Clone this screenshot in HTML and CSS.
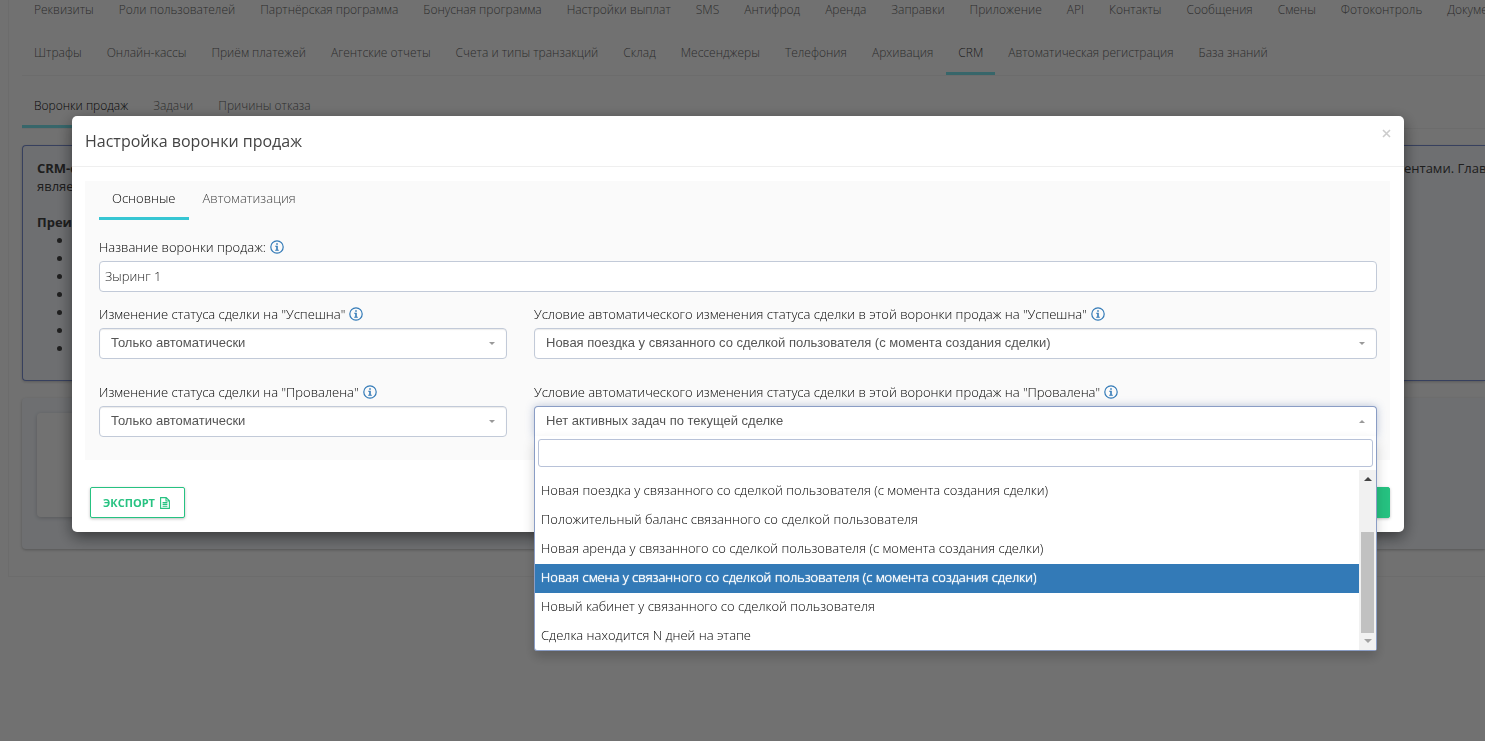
FILE: index.html
```html
<!DOCTYPE html>
<html lang="ru">
<head>
<meta charset="utf-8">
<title>Настройка воронки продаж</title>
<meta name="viewport" content="width=device-width, initial-scale=1">
<link rel="stylesheet" href="styles.css">
</head>
<body>
<svg class="sprite" aria-hidden="true">
  <symbol id="info" viewBox="0 0 14 14">
    <circle cx="7" cy="7" r="6.2" fill="none" stroke="currentColor" stroke-width="1.2"/>
    <path d="M6.2 3.2h1.6v1.5H6.2zM5.2 5.8h2.6v4h1v.9H5.2v-.9h1V6.7h-1z" fill="currentColor"/>
  </symbol>
</svg>

<main class="page">
  <section class="card">
    <nav class="tabs tabs-page">
      <a href="#">Реквизиты</a><a href="#">Роли пользователей</a><a href="#">Партнёрская программа</a><a href="#">Бонусная программа</a><a href="#">Настройки выплат</a><a href="#">SMS</a><a href="#">Антифрод</a><a href="#">Аренда</a><a href="#">Заправки</a><a href="#">Приложение</a><a href="#">API</a><a href="#">Контакты</a><a href="#">Сообщения</a><a href="#">Смены</a><a href="#">Фотоконтроль</a><a href="#">Документы</a>
    </nav>
    <nav class="tabs tabs-page tabs-line">
      <a href="#">Штрафы</a><a href="#">Онлайн-кассы</a><a href="#">Приём платежей</a><a href="#">Агентские отчеты</a><a href="#">Счета и типы транзакций</a><a href="#">Склад</a><a href="#">Мессенджеры</a><a href="#">Телефония</a><a href="#">Архивация</a><a href="#" class="active">CRM</a><a href="#">Автоматическая регистрация</a><a href="#">База знаний</a>
    </nav>
    <nav class="tabs tabs-page tabs-line tabs-sub">
      <a href="#" class="active">Воронки продаж</a><a href="#">Задачи</a><a href="#">Причины отказа</a>
    </nav>
    <div class="note">
      <div class="note-line"><span><b>CRM-система</b></span><span class="note-end">ентами. Главной</span></div>
      <div>является</div>
      <p><b>Преимущества</b></p>
      <ul><li></li><li></li><li></li><li></li><li></li><li></li><li></li></ul>
    </div>
    <div class="board"><div class="board-card"></div></div>
  </section>
</main>

<div class="overlay">
  <div class="modal" role="dialog" aria-modal="true" aria-labelledby="title">
    <header class="modal-head">
      <h1 id="title">Настройка воронки продаж</h1>
      <button type="button" class="close" aria-label="Закрыть"><svg viewBox="0 0 9 9"><path d="M1 1l7 7M8 1L1 8" stroke="currentColor" stroke-width="1.6"/></svg></button>
    </header>
    <form class="modal-body">
      <div class="panel">
        <nav class="tabs tabs-modal"><a href="#" class="active">Основные</a><a href="#">Автоматизация</a></nav>
        <div class="grid">
          <div class="field full">
            <label for="name">Название воронки продаж: <svg class="info"><use href="#info"/></svg></label>
            <input id="name" class="control" type="text" value="Зыринг 1">
          </div>
          <div class="field">
            <label for="won">Изменение статуса сделки на "Успешна" <svg class="info"><use href="#info"/></svg></label>
            <div class="pick"><select id="won" class="control"><option>Только автоматически</option></select></div>
          </div>
          <div class="field wide">
            <label for="won-rule">Условие автоматического изменения статуса сделки в этой воронки продаж на "Успешна" <svg class="info"><use href="#info"/></svg></label>
            <div class="pick"><select id="won-rule" class="control"><option>Новая поездка у связанного со сделкой пользователя (с момента создания сделки)</option></select></div>
          </div>
          <div class="field">
            <label for="lost">Изменение статуса сделки на "Провалена" <svg class="info"><use href="#info"/></svg></label>
            <div class="pick"><select id="lost" class="control"><option>Только автоматически</option></select></div>
          </div>
          <div class="field wide">
            <label for="lost-rule">Условие автоматического изменения статуса сделки в этой воронки продаж на "Провалена" <svg class="info"><use href="#info"/></svg></label>
            <div class="pick open">
              <button id="lost-rule" type="button" class="control" aria-haspopup="listbox" aria-expanded="true">Нет активных задач по текущей сделке</button>
              <div class="menu">
                <input class="search" type="search" aria-label="Поиск">
                <div class="menu-body">
                  <ul class="options" role="listbox" aria-label="Условие">
                    <li role="option">Новая поездка у связанного со сделкой пользователя (с момента создания сделки)</li>
                    <li role="option">Положительный баланс связанного со сделкой пользователя</li>
                    <li role="option">Новая аренда у связанного со сделкой пользователя (с момента создания сделки)</li>
                    <li role="option" class="current" aria-selected="true">Новая смена у связанного со сделкой пользователя (с момента создания сделки)</li>
                    <li role="option">Новый кабинет у связанного со сделкой пользователя</li>
                    <li role="option">Сделка находится N дней на этапе</li>
                  </ul>
                  <div class="scroll" aria-hidden="true"><i class="up"></i><i class="thumb"></i><i class="down"></i></div>
                </div>
              </div>
            </div>
          </div>
        </div>
      </div>
      <footer class="modal-foot">
        <button type="button" class="btn">Экспорт
          <svg viewBox="0 0 12 12"><path d="M1.6.6h5.6l3.2 3.2v7.6H1.6zM7 .6V4h3.4M3.6 5.6h4.8M3.6 7.4h4.8M3.6 9.2h4.8" fill="none" stroke="currentColor" stroke-width="1.1"/></svg>
        </button>
        <button type="submit" class="btn btn-main">Сохранить
          <svg viewBox="0 0 12 12"><path d="M.6.6h8.2l2.6 2.6v8.2H.6zM3 .6v3.6h5V.6M3 11.4V7h6v4.4" fill="none" stroke="currentColor" stroke-width="1.1"/></svg>
        </button>
      </footer>
    </form>
  </div>
</div>
</body>
</html>
```
FILE: styles.css
```css
* { box-sizing: border-box; }

body {
  margin: 0;
  min-height: 100vh;
  overflow: hidden;
  background: #fafafa;
  color: #000;
  font: 13px/18px "Open Sans", "Noto Sans", sans-serif;
}

a { color: inherit; text-decoration: none; }
ul { margin: 0; padding: 0; list-style: none; }
button, input, select { font: inherit; color: inherit; }
.sprite { display: none; }

/* Page under the dialog */
.page { margin-top: -11px; padding-left: 8px; }

.card {
  padding: 0 0 27px 13px;
  border: solid #f0f0f0;
  border-width: 0 0 1px 1px;
  background: #fbfbfb;
}

.tabs { display: flex; gap: 1px; white-space: nowrap; }
.tabs a { padding: 12px 12px 10px; border-bottom: 3px solid transparent; }
.tabs-page { color: #666; font-size: 12px; font-weight: 300; }
.tabs-page .active { border-color: #7ae3ec; color: #444; }
.tabs-line { border-bottom: 1px solid #f0f0f0; }
.tabs-sub { margin: 9px 0 16px; }
.tabs-sub .active { color: #111; }

.note {
  height: 236px;
  padding: 13px 14px;
  border: 1px solid #7b8fd0;
  border-right: 0;
  border-radius: 4px 0 0 4px;
  background: #f3f6fb;
  color: #444;
  box-shadow: 0 1px 3px rgba(0, 0, 0, .2);
}
.note-line { display: flex; justify-content: space-between; white-space: nowrap; }
.note-end { width: 67px; }
.note p { margin: 18px 0 0; }
.note ul { padding-left: 36px; list-style: disc; }

.board {
  height: 151px;
  margin-top: 17px;
  padding: 15px;
  border-radius: 4px 0 0 4px;
  background: #f3f6fb;
  box-shadow: 0 1px 3px rgba(0, 0, 0, .25);
}
.board-card {
  width: 270px;
  height: 104px;
  border-radius: 4px;
  background: #fbfbfb;
  box-shadow: 0 1px 4px rgba(0, 0, 0, .2);
}

/* Dialog */
.overlay {
  position: fixed;
  inset: 0;
  padding: 116px 81px 0 72px;
  background: rgba(0, 0, 0, .55);
  font-weight: 300;
}
.modal {
  border-radius: 5px;
  background: #fff;
  box-shadow: 0 5px 15px rgba(0, 0, 0, .5);
}
.modal-head {
  display: flex;
  justify-content: space-between;
  align-items: flex-start;
  padding: 13px 13px 13px 13px;
  border-bottom: 1px solid #efefef;
}
h1 { margin: 0; color: #444; font-size: 16px; line-height: 24px; font-weight: 400; }
.close { width: 9px; height: 9px; padding: 0; border: 0; background: none; color: #ccc; }
.close svg { display: block; }

.modal-body { padding: 14px 14px 14px 13px; }
.panel { padding: 0 13px 23px 14px; background: #fafafa; }
.tabs-modal { margin-bottom: 18px; color: #444; }
.tabs-modal a { padding: 8px 13px 10px; }
.tabs-modal .active { border-color: #36c6d3; color: #000; }

.grid { display: grid; grid-template-columns: repeat(12, 1fr); column-gap: 27px; }
.field { grid-column: span 4; min-width: 0; margin-bottom: 24px; }
.wide { grid-column: span 8; }
.full { grid-column: span 12; margin-bottom: 13px; }
.field:nth-last-child(-n+2) { margin-bottom: 0; }
label { display: flex; align-items: center; gap: 4px; margin-bottom: 5px; white-space: nowrap; }
.info { width: 14px; height: 14px; color: #337ab7; }

.control {
  display: block;
  width: 100%;
  height: 31px;
  padding: 0 5px 2px;
  border: 1px solid #c2cad8;
  border-radius: 4px;
  background: #fff;
  color: #222;
}
.pick { position: relative; }
.pick .control {
  appearance: none;
  padding: 0 30px 2px 11px;
  color: #555;
  font: 13px/18px "Liberation Sans", Arial, sans-serif;
  text-align: left;
  box-shadow: inset 0 1px 1px rgba(0, 0, 0, .08);
}
.pick::after {
  content: "";
  position: absolute;
  top: 14px;
  right: 12px;
  border: solid transparent;
  border-width: 3px 3px 0;
  border-top-color: #999;
}
.open::after { border-width: 0 3px 3px; border-bottom-color: #999; }
.open .control {
  border-color: #8a9dc5;
  border-bottom-color: transparent;
  border-radius: 4px 4px 0 0;
  box-shadow: 0 0 8px rgba(60, 90, 150, .35);
}

.menu {
  position: absolute;
  top: 30px;
  left: 0;
  right: 0;
  z-index: 2;
  border: 1px solid #8a9dc5;
  border-top: 0;
  border-radius: 0 0 3px 3px;
  background: #fff;
  box-shadow: 0 6px 12px rgba(0, 0, 0, .18);
}
.search {
  display: block;
  width: calc(100% - 6px);
  height: 28px;
  margin: 3px 3px 3px;
  border: 1px solid #b8c2d8;
  border-radius: 3px;
  background: #fff;
}
.menu-body { display: flex; height: 180px; }
.options { flex: 1; padding-top: 7px; overflow: hidden; }
.options li { height: 29px; padding: 4px 6px 7px; white-space: nowrap; }
.options .current { background: #337ab7; color: #fff; text-shadow: 0 0 1px #fff, 0 0 1px #fff; }

.scroll {
  display: flex;
  flex-direction: column;
  align-items: center;
  width: 17px;
  padding: 7px 0;
  background: #f1f1f1;
}
.up { border: solid transparent; border-width: 0 4px 4px; border-bottom-color: #444; }
.down { margin-top: 6px; border: solid transparent; border-width: 4px 4px 0; border-top-color: #a3a3a3; }
.thumb { width: 13px; height: 101px; margin-top: auto; background: #c1c1c1; }

.modal-foot { display: flex; justify-content: space-between; padding: 27px 0 0 5px; }
.btn {
  display: flex;
  align-items: center;
  gap: 4px;
  height: 31px;
  padding: 0 13px 0 12px;
  border: 1px solid #26c281;
  border-radius: 2px;
  background: #fff;
  color: #26c281;
  font-size: 11px;
  font-weight: 700;
  text-transform: uppercase;
  box-shadow: 0 1px 3px rgba(0, 0, 0, .25);
}
.btn svg { width: 12px; height: 12px; }
.btn-main { padding: 0 12px; background: #26c281; color: #fff; }
```
